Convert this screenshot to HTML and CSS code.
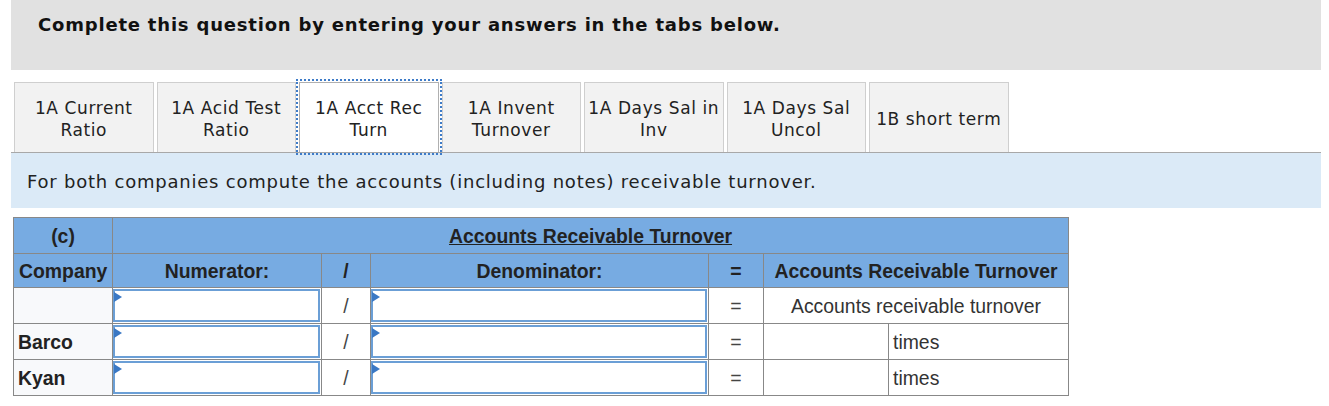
FILE: index.html
```html
<!DOCTYPE html>
<html lang="en">
<head>
    <meta charset="UTF-8">
    <title>Acct Rec Turnover</title>
    <link rel="stylesheet" href="styles.css">
</head>
<body>
    <div class="page">
        <div class="question-head">
            <h1>Complete this question by entering your answers in the tabs below.</h1>
        </div>

        <div class="tabs">
            <div class="tab">1A Current<br>Ratio</div>
            <div class="tab">1A Acid Test<br>Ratio</div>
            <div class="tab active">1A Acct Rec<br>Turn</div>
            <div class="tab">1A Invent<br>Turnover</div>
            <div class="tab">1A Days Sal in<br>Inv</div>
            <div class="tab">1A Days Sal<br>Uncol</div>
            <div class="tab">1B short term</div>
        </div>

        <div class="instructions">For both companies compute the accounts (including notes) receivable turnover.</div>

        <table class="answer-table">
            <colgroup>
                <col class="col-company">
                <col class="col-num">
                <col class="col-op">
                <col class="col-den">
                <col class="col-eq">
                <col class="col-res-a">
                <col class="col-res-b">
            </colgroup>
            <thead>
                <tr class="head-top">
                    <th>(c)</th>
                    <th colspan="6"><u>Accounts Receivable Turnover</u></th>
                </tr>
                <tr class="head-cols">
                    <th class="left">Company</th>
                    <th>Numerator:</th>
                    <th>/</th>
                    <th>Denominator:</th>
                    <th>=</th>
                    <th colspan="2">Accounts Receivable Turnover</th>
                </tr>
            </thead>
            <tbody>
                <tr>
                    <td class="company"></td>
                    <td class="entry"><div class="field"></div></td>
                    <td class="op">/</td>
                    <td class="entry"><div class="field"></div></td>
                    <td class="op">=</td>
                    <td colspan="2" class="label">Accounts receivable turnover</td>
                </tr>
                <tr>
                    <td class="company">Barco</td>
                    <td class="entry"><div class="field"></div></td>
                    <td class="op">/</td>
                    <td class="entry"><div class="field"></div></td>
                    <td class="op">=</td>
                    <td></td>
                    <td class="unit">times</td>
                </tr>
                <tr>
                    <td class="company">Kyan</td>
                    <td class="entry"><div class="field"></div></td>
                    <td class="op">/</td>
                    <td class="entry"><div class="field"></div></td>
                    <td class="op">=</td>
                    <td></td>
                    <td class="unit">times</td>
                </tr>
            </tbody>
        </table>
    </div>
</body>
</html>
```

FILE: styles.css
```css
body {
    margin: 0;
    padding: 0;
    background: #fff;
    font-family: "DejaVu Sans", Verdana, sans-serif;
    color: #222;
}
.page {
    width: 1310px;
    margin-left: 11px;
}
.question-head {
    background: #e1e1e1;
    height: 70px;
    box-sizing: border-box;
    padding: 13px 0 0 27px;
}
.question-head h1 {
    margin: 0;
    font-size: 18px;
    letter-spacing: 0.8px;
    line-height: 24px;
    font-weight: bold;
    color: #111;
}
.tabs {
    display: flex;
    gap: 3px;
    margin-top: 12px;
    padding-left: 3px;
    border-bottom: 1px solid #a8a8a8;
    height: 70px;
}
.tab {
    width: 139.5px;
    box-sizing: border-box;
    height: 70px;
    padding-top: 2px;
    background: #f2f2f2;
    border: 1px solid #cfcfcf;
    border-bottom: none;
    display: flex;
    align-items: center;
    justify-content: center;
    text-align: center;
    font-size: 17px;
    letter-spacing: 0.6px;
    line-height: 22px;
    color: #222;
}
.tab.active {
    background: #fff;
    border-color: #b0b0b0;
    outline: 2px dotted #3d7bc8;
    outline-offset: 1px;
}
.instructions {
    background: #dbeaf7;
    height: 55px;
    box-sizing: border-box;
    padding: 17px 0 0 16px;
    font-size: 18px;
    letter-spacing: 0.78px;
    line-height: 24px;
    color: #222;
}
.answer-table {
    margin: 9px 0 0 2px;
    border-collapse: collapse;
    font-family: "Liberation Sans", Arial, sans-serif;
    font-size: 19.4px;
    line-height: 22px;
    color: #222;
}
.col-company { width: 99px; }
.col-num { width: 209px; }
.col-op { width: 49px; }
.col-den { width: 338px; }
.col-eq { width: 55px; }
.col-res-a { width: 125px; }
.col-res-b { width: 180px; }
.answer-table th,
.answer-table td {
    border: 1px solid #888;
    padding: 0;
}
.answer-table th {
    background: #77abe2;
    font-weight: bold;
    text-align: center;
}
.head-top th {
    height: 35px;
}
.head-cols th {
    height: 33px;
}
.answer-table th.left {
    text-align: left;
    padding-left: 5px;
}
.answer-table td.company {
    background: #f8f9fb;
    font-weight: bold;
    padding-left: 4px;
}
.answer-table td.entry {
    padding: 1px 1px 1px 0;
}
.field {
    position: relative;
    height: 33px;
    box-sizing: border-box;
    border: 2px solid #6b9fd6;
    background: #fff;
}
.field::before {
    content: "";
    position: absolute;
    left: -1px;
    top: 1px;
    border-left: 8px solid #3a78c4;
    border-top: 5px solid transparent;
    border-bottom: 5px solid transparent;
}
.answer-table td.op {
    text-align: center;
    color: #444;
}
.answer-table td.label {
    text-align: center;
    color: #333;
}
.answer-table td.unit {
    padding-left: 4px;
    color: #333;
}
```
